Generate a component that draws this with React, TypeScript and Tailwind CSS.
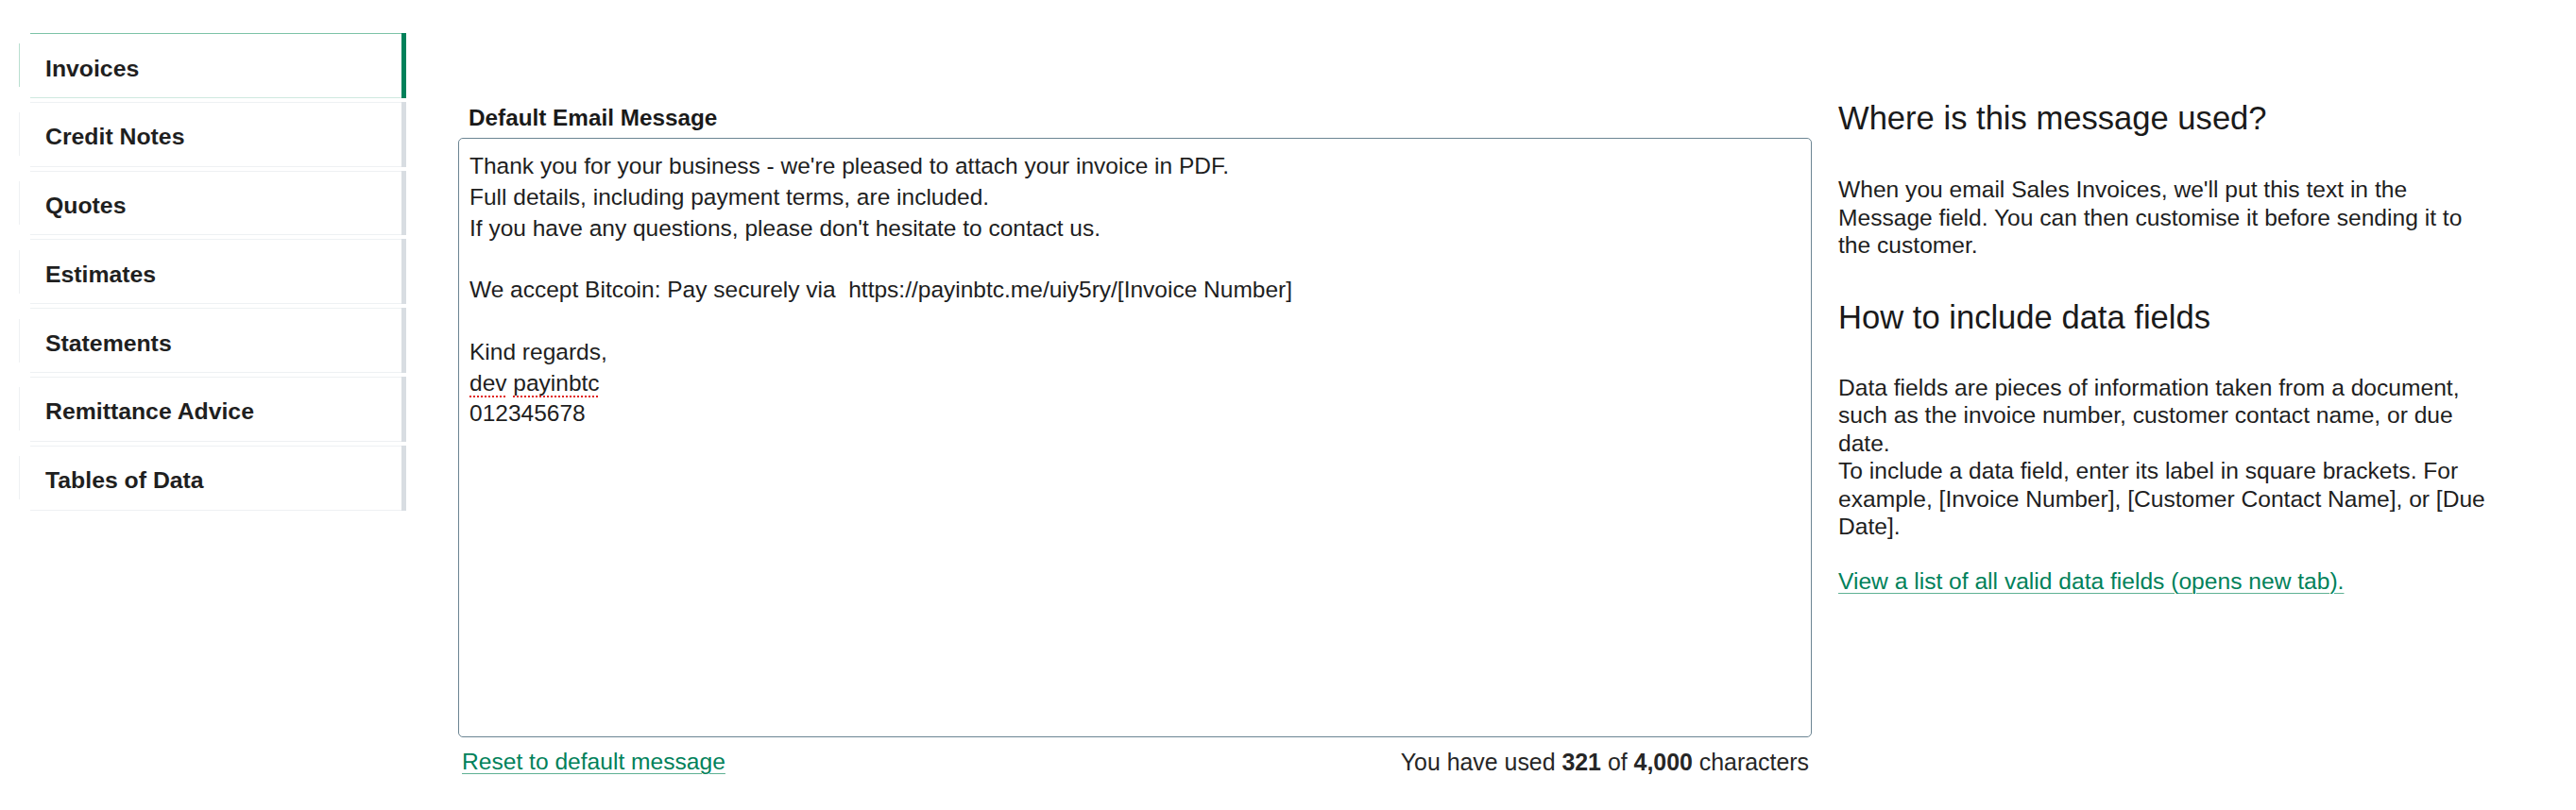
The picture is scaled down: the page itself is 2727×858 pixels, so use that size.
import React from "react";

const items = [
  "Invoices",
  "Credit Notes",
  "Quotes",
  "Estimates",
  "Statements",
  "Remittance Advice",
  "Tables of Data",
];

function NavItem({ label, active }: { label: string; active: boolean }) {
  return (
    <div className="flex h-[68.8px]">
      <div
        className={
          "w-px self-center h-[46px] " + (active ? "bg-[#b9dfd0]" : "bg-[#eef1f3]")
        }
      />
      <div
        className={
          "flex flex-1 items-center ml-[11px] pl-[16px] pt-[7px] border-y " +
          (active ? "border-t-[#7cc3a7] border-b-[#cfe9df]" : "border-[#eef1f3]")
        }
      >
        <span className="text-[24.8px] font-bold text-[#1f1f1f] leading-none">
          {label}
        </span>
      </div>
      <div className={"w-[5px] " + (active ? "bg-[#00815a]" : "bg-[#d8dde2]")} />
    </div>
  );
}

export default function App() {
  return (
    <div
      className="min-h-[858px] w-[2727px] bg-white text-[#1e1e1e]"
      style={{ fontFamily: '"Liberation Sans", Arial, sans-serif' }}
    >
      <div className="flex pt-[35px] pl-[20px]">
        <nav className="w-[410px] flex flex-col gap-[4px]">
          {items.map((it, i) => (
            <NavItem key={it} label={it} active={i === 0} />
          ))}
        </nav>

        <div className="ml-[55px] w-[1433px] pt-[75px]">
          <div className="pl-[11px] mb-[6px] text-[24.3px] leading-[30px] font-bold text-[#1a1a1a]">
            Default Email Message
          </div>
          <div className="h-[635px] rounded-[5px] border border-[#6c8593] pl-[11px] pt-[13px] text-[24.5px] leading-[32.8px] text-[#1e1e1e]">
            <div>Thank you for your business - we're pleased to attach your invoice in PDF.</div>
            <div>Full details, including payment terms, are included.</div>
            <div>If you have any questions, please don't hesitate to contact us.</div>
            <div>&nbsp;</div>
            <div>We accept Bitcoin: Pay securely via&nbsp; https://payinbtc.me/uiy5ry/[Invoice Number]</div>
            <div>&nbsp;</div>
            <div>Kind regards,</div>
            <div>
              <span className="underline decoration-dotted decoration-[#e0201b] decoration-2 underline-offset-[6px]">dev</span>{" "}
              <span className="underline decoration-dotted decoration-[#e0201b] decoration-2 underline-offset-[6px]">payinbtc</span>
            </div>
            <div>012345678</div>
          </div>
          <div className="mt-[11px] flex justify-between items-center text-[24.6px] leading-[30px]">
            <a className="pl-[4px] text-[#00815a] underline decoration-1 underline-offset-[4px] decoration-[#5fb194] cursor-pointer">
              Reset to default message
            </a>
            <div className="pr-[3px] text-[24.9px] text-[#262626]">
              You have used <span className="font-bold">321</span> of{" "}
              <span className="font-bold">4,000</span> characters
            </div>
          </div>
        </div>

        <div className="ml-[28px] w-[690px] pt-[69px]">
          <h2 className="text-[34.6px] leading-[42px] font-normal text-[#1a1a1a]">
            Where is this message used?
          </h2>
          <p className="mt-[40px] text-[24.6px] leading-[29.5px]">
            When you email Sales Invoices, we'll put this text in the Message field. You can then
            customise it before sending it to the customer.
          </p>
          <h2 className="mt-[40px] text-[34.6px] leading-[42px] font-normal text-[#1a1a1a]">
            How to include data fields
          </h2>
          <p className="mt-[39px] text-[24.6px] leading-[29.5px]">
            Data fields are pieces of information taken from a document, such as the invoice
            number, customer contact name, or due date.
            <br />
            To include a data field, enter its label in square brackets. For example, [Invoice
            Number], [Customer Contact Name], or [Due Date].
          </p>
          <p className="mt-[28px] text-[24.6px] leading-[29.5px]">
            <a className="text-[#00815a] underline decoration-1 underline-offset-[4px] decoration-[#5fb194] cursor-pointer">
              View a list of all valid data fields (opens new tab).
            </a>
          </p>
        </div>
      </div>
    </div>
  );
}
